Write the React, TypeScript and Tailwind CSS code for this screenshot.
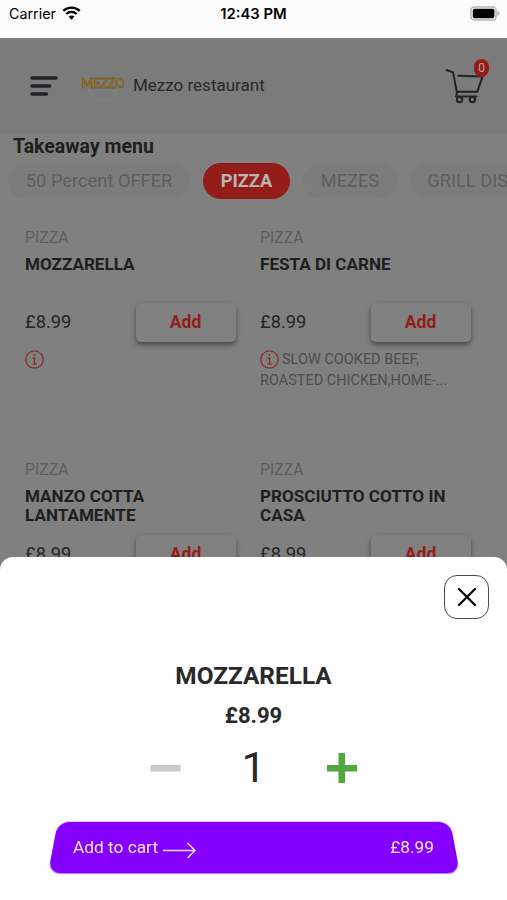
import React, { useState } from 'react';

const categories = ['50 Percent OFFER', 'PIZZA', 'MEZES', 'GRILL DISHES'];

const products = [
  { name: 'MOZZARELLA', price: '£8.99', description: '', info: true },
  { name: 'FESTA DI CARNE', price: '£8.99', description: 'SLOW COOKED BEEF, ROASTED CHICKEN,HOME-...', info: true },
  { name: 'MANZO COTTA LANTAMENTE', price: '£8.99', description: '', info: false },
  { name: 'PROSCIUTTO COTTO IN CASA', price: '£8.99', description: '', info: false },
];

const WifiIcon = () => (
  <svg className="w-[19px] h-[14px] -mt-[2px]" viewBox="0 0 20 15" fill="none" stroke="#000" strokeWidth="2.4">
    <path d="M1.2 5.2C6.2.6 13.8.6 18.8 5.2" />
    <path d="M4.4 8.6c3.2-3 8-3 11.2 0" />
    <path d="M10 14.6l-3.1-3.3c1.8-1.6 4.4-1.6 6.2 0z" fill="#000" stroke="none" />
  </svg>
);

const BatteryIcon = () => (
  <svg className="w-[31px] h-[15px] -mt-[2px]" viewBox="0 0 31 15">
    <rect x="0.9" y="0.9" width="25.2" height="13.2" rx="3.6" fill="#fafafa" stroke="#b5b5b5" strokeWidth="1.5" />
    <rect x="2.8" y="2.7" width="21.6" height="9.6" rx="1.8" fill="#000" />
    <path d="M27.4 5v5c1.3-.4 2.2-1.3 2.2-2.5S28.7 5.4 27.4 5z" fill="#b5b5b5" />
  </svg>
);

const MenuIcon = () => (
  <svg className="w-[28px] h-[20px]" viewBox="0 0 28 20" stroke="#222228" strokeWidth="3.6" strokeLinecap="round">
    <path d="M2 2h24M2 10h17.5M2 18h14.5" />
  </svg>
);

const MezzoLogo = () => (
  <svg className="w-[44px] h-[28px]" viewBox="0 0 44 28">
    <path d="M9 15a13.5 11.5 0 0 0 27 0" fill="none" stroke="#8b867f" strokeWidth="0.7" />
    <text x="1.5" y="14" fontFamily="Lato, sans-serif" fontWeight="900" fontSize="13" letterSpacing="-0.4" fill="#9b741c" stroke="#4b4235" strokeWidth="0.3">
      MEZZO
    </text>
  </svg>
);

const CartIcon = () => (
  <svg className="w-[40px] h-[36px]" viewBox="0 0 40 36" fill="none" stroke="#222" strokeWidth="2" strokeLinecap="round" strokeLinejoin="round">
    <path d="M1.5 2l6.5 2.4 3.8 19.4h20.4L37.6 8.5l-24.3-.8" />
    <path d="M12 24.5l-1 4h20.5" />
    <circle cx="14.6" cy="31.6" r="2.7" />
    <circle cx="27.4" cy="31.6" r="2.7" />
  </svg>
);

const InfoIcon = () => (
  <svg className="inline-block align-[-5px] w-[19px] h-[19px] mr-[3px]" viewBox="0 0 19 19" fill="none" stroke="#8b2b32" strokeWidth="1.3">
    <circle cx="9.5" cy="9.5" r="8.7" />
    <path d="M7.6 8h2v6M7.3 14.1h4.7" />
    <circle cx="9.3" cy="4.9" r="1" fill="#8b2b32" stroke="none" />
  </svg>
);

const ProductCard = ({ product }: { product: (typeof products)[number] }) => (
  <div className="h-[232px]">
    <p className="text-[15.8px] leading-[18px] text-[#5e5e5e]">PIZZA</p>
    <h3 className="mt-[8px] h-[48px] text-[17.1px] leading-[18.5px] font-bold text-[#1e1e1e]">{product.name}</h3>
    <div className="flex items-center justify-between">
      <span className="pb-[1px] text-[18.3px] leading-[20px] text-[#252525]">{product.price}</span>
      <button className="w-[100px] h-[39px] rounded-[5px] bg-[#818181] text-[17.5px] font-bold text-[#941c19] shadow-[0_3px_5px_#494949]">
        Add
      </button>
    </div>
    <p className="mt-[8px] w-[200px] text-[14.5px] leading-[20.5px] text-[#4d4d4d]">
      {product.info && <InfoIcon />}
      {product.description}
    </p>
  </div>
);

const App = () => {
  const [quantity, setQuantity] = useState(1);

  return (
    <div className="relative w-[507px] h-[900px] overflow-hidden bg-[#808080] font-[Roboto,sans-serif]">
      <div className="grid grid-cols-3 items-center h-[38px] pb-[10px] pl-[9px] pr-[6px] bg-[#fbfbfb] text-black">
        <div className="flex items-center gap-[6px] font-[Inter,sans-serif] text-[14.3px]">
          Carrier <WifiIcon />
        </div>
        <div className="text-center whitespace-nowrap font-[Inter,sans-serif] text-[14.8px] font-semibold -ml-[3px]">12:43 PM</div>
        <div className="flex justify-end">
          <BatteryIcon />
        </div>
      </div>

      <header className="flex items-center h-[96px] pl-[30px] pr-[22px] bg-[#7b7b7b]">
        <MenuIcon />
        <div className="ml-[22px] pt-[4px]">
          <MezzoLogo />
        </div>
        <span className="ml-[9px] text-[17px] text-[#292929]">Mezzo restaurant</span>
        <div className="relative ml-auto">
          <CartIcon />
          <span className="absolute -top-[9px] right-[-4px] flex items-center justify-center w-[15px] h-[18px] rounded-full bg-[#981b18] text-[12px] text-[#aaa]">
            0
          </span>
        </div>
      </header>

      <h2 className="pt-[1px] pl-[13px] text-[19.5px] leading-[23px] font-bold text-[#1e1e1e]">Takeaway menu</h2>
      <nav className="flex gap-[12.5px] mt-[5px] pl-[8px] overflow-hidden">
        {categories.map((category) => (
          <button
            key={category}
            className={
              category === 'PIZZA'
                ? 'shrink-0 h-[36px] px-[18px] pb-[1px] rounded-full bg-[#941c19] text-[18.3px] font-bold text-[#b5b5b5]'
                : 'shrink-0 h-[36px] px-[17.8px] pb-[1px] rounded-full bg-[#7c7c7c] text-[18.3px] text-[#5e5e5e]'
            }
          >
            {category}
          </button>
        ))}
      </nav>

      <main className="grid grid-cols-[210.5px_210.5px] gap-x-[24.5px] pt-[30px] pl-[25px]">
        {products.map((product) => (
          <ProductCard key={product.name} product={product} />
        ))}
      </main>

      <section className="absolute inset-x-0 bottom-0 h-[343px] rounded-t-[13px] bg-white px-[18px] pt-[18px] text-[#292929]">
        <div className="flex justify-end">
          <button className="flex items-center justify-center w-[45px] h-[44px] rounded-[13px] border-[1.5px] border-[#4b4b4b]">
            <svg className="w-[20px] h-[20px]" viewBox="0 0 20 20" stroke="#000" strokeWidth="2.2" strokeLinecap="round">
              <path d="M2 2l16 16M18 2L2 18" />
            </svg>
          </button>
        </div>
        <h2 className="mt-[43px] text-center text-[24.4px] leading-[28px] font-bold">MOZZARELLA</h2>
        <p className="mt-[14px] text-center text-[22px] leading-[24px] font-bold">£8.99</p>
        <div className="flex items-center justify-between h-[50px] mt-[15px] ml-[132px] mr-[132px]">
          <button onClick={() => setQuantity(Math.max(1, quantity - 1))}>
            <svg className="w-[31px] h-[30px]" viewBox="0 0 31 30">
              <path d="M0.5 12h30v6.5h-30z" fill="#cacaca" />
            </svg>
          </button>
          <span className="pb-[2px] text-[43px] leading-[50px]">{quantity}</span>
          <button onClick={() => setQuantity(quantity + 1)}>
            <svg className="w-[31px] h-[30px]" viewBox="0 0 31 30">
              <path d="M12.5 0h6.5v12h12v6.5H19V30h-6.500V18.500H1V12h11.500z" fill="#52a83f" />
            </svg>
          </button>
        </div>
        <button className="relative flex items-center justify-between w-[402px] h-[52px] mt-[28px] ml-[35px] pl-[20px] pr-[21px] pt-[2px] text-[17.3px] text-[#f4e5ff]">
          <span className="absolute inset-0 rounded-[12px] bg-[#8500fc] [transform:perspective(100px)_rotateX(5.4deg)]" />
          <span className="relative flex items-center gap-[5px]">
            Add to cart
            <svg className="mt-[5px] w-[33px] h-[17px]" viewBox="0 0 33 17" fill="none" stroke="currentColor" strokeWidth="1.5">
              <path d="M0 8.5h32M24.5 1l7.5 7.5-7.5 7.5" />
            </svg>
          </span>
          <span className="relative">£8.99</span>
        </button>
      </section>
    </div>
  );
};

export default App;
